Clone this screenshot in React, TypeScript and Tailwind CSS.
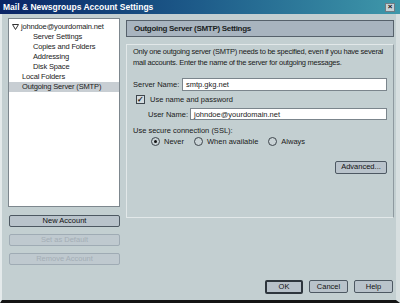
import React from "react";

const font = { fontFamily: '"Liberation Sans", Arial, sans-serif' };

function Btn({
  label,
  disabled,
  primary,
  className = "",
}: {
  label: string;
  disabled?: boolean;
  primary?: boolean;
  className?: string;
}) {
  return (
    <div
      className={`flex items-center justify-center whitespace-nowrap rounded-[2px] text-[7.5px] leading-none ${
        disabled
          ? "border border-[#9fabb4] bg-[#bfc9cf] text-[#a4aeb6]"
          : primary
          ? "border-2 border-[#2e363d] bg-[#b7c1c9] text-[#111]"
          : "border border-[#4d5862] bg-[#b9c3cb] text-[#111]"
      } ${className}`}
    >
      {label}
    </div>
  );
}

function Radio({ checked, label }: { checked?: boolean; label: string }) {
  return (
    <div className="flex items-center gap-[4px] whitespace-nowrap">
      <div className="flex h-[9px] w-[9px] items-center justify-center rounded-full border border-[#3d454c] bg-[#c9d3d6]">
        {checked && <div className="h-[3px] w-[3px] rounded-full bg-[#111]" />}
      </div>
      <span>{label}</span>
    </div>
  );
}

const treeItems = [
  { label: "Server Settings", indent: true },
  { label: "Copies and Folders", indent: true },
  { label: "Addressing", indent: true },
  { label: "Disk Space", indent: true },
  { label: "Local Folders", indent: false },
  { label: "Outgoing Server (SMTP)", indent: false, selected: true },
];

export default function App() {
  return (
    <div
      className="flex h-[303px] w-[400px] flex-col overflow-hidden bg-[#c3cfd1] text-[7.5px] text-[#1a1a1a]"
      style={font}
    >
      {/* title bar */}
      <div className="flex h-[14px] shrink-0 items-center justify-between bg-gradient-to-r from-[#0b2466] via-[#1e5c8a] to-[#3f98aa] pl-[3px] pr-[5px]">
        <span className="text-[8.5px] font-bold text-white">Mail &amp; Newsgroups Account Settings</span>
        <div className="flex h-[9px] w-[10px] items-center justify-center border border-[#6f7c84] bg-[#c7d1d5] text-[8px] font-bold leading-none text-[#111]">
          ×
        </div>
      </div>

      <div className="flex flex-1 border-l-2 border-r-[4px] border-b-[3px] border-l-[#e4eaeb] border-r-[#d7dfe0] border-b-[#141414]">
        <div className="flex flex-1 gap-[6px] pl-[6px] pr-[2px] pt-[4px] pb-[6px]">
          {/* left column */}
          <div className="flex w-[112px] flex-col">
            <div className="h-[189px] border border-[#7d878e] bg-white pt-[3px] text-[7.5px] tracking-[-0.15px]">
              <div className="flex h-[10px] items-center pl-[3px]">
                <svg width="7" height="6" viewBox="0 0 7 6" className="mr-[2px]">
                  <path d="M0.5 0.5 H6.5 L3.5 5.5 Z" fill="none" stroke="#333" strokeWidth="1" />
                </svg>
                <span>johndoe@yourdomain.net</span>
              </div>
              {treeItems.map((it) => (
                <div
                  key={it.label}
                  className={`flex h-[10px] items-center whitespace-nowrap ${it.indent ? "pl-[24px]" : "pl-[13px]"} ${
                    it.selected ? "bg-[#c8ced3]" : ""
                  }`}
                >
                  {it.label}
                </div>
              ))}
            </div>
            <div className="mt-[8px] flex flex-col gap-[7px] pl-[1px]">
              <Btn label="New Account" className="h-[12px]" />
              <Btn label="Set as Default" disabled className="h-[12px]" />
              <Btn label="Remove Account" disabled className="h-[12px]" />
            </div>
          </div>

          {/* right column */}
          <div className="flex flex-1 flex-col">
            <div className="mt-[2px] flex h-[17px] items-center border border-[#56616b] bg-[#a8b4bf] pl-[7px] text-[8px] font-bold tracking-[-0.3px] text-[#1b1f23]">
              Outgoing Server (SMTP) Settings
            </div>

            <div className="mt-[7px] h-[174px] border border-[#e2e8e9] border-r-[#8e999f] pl-[6px] pr-[5px] pt-[2px]">
              <p className="whitespace-nowrap leading-[10.5px] tracking-[-0.25px]">
                Only one outgoing server (SMTP) needs to be specified, even if you have several
                <br />
                mail accounts. Enter the name of the server for outgoing messages.
              </p>

              <div className="mt-[10px] flex items-center pr-[1px]">
                <span className="w-[49px] whitespace-nowrap">Server Name:</span>
                <div className="flex h-[13px] flex-1 items-center border border-[#7b858c] bg-white pl-[3px]">
                  smtp.gkg.net
                </div>
              </div>

              <div className="mt-[3px] flex items-center pl-[3px]">
                <div className="mr-[5px] flex h-[9px] w-[9px] items-center justify-center border border-[#3d454c] bg-[#d4dcdf] text-[8px] font-bold leading-none">
                  ✓
                </div>
                <span>Use name and password</span>
              </div>

              <div className="mt-[3px] flex items-center pl-[15px] pr-[1px]">
                <span className="w-[42px] whitespace-nowrap">User Name:</span>
                <div className="flex h-[12px] flex-1 items-center border border-[#7b858c] bg-white pl-[3px]">
                  johndoe@yourdomain.net
                </div>
              </div>

              <div className="mt-[5px]">Use secure connection (SSL):</div>
              <div className="flex h-[10px] items-center gap-[10px] pl-[18px]">
                <Radio checked label="Never" />
                <Radio label="When available" />
                <Radio label="Always" />
              </div>

              <div className="mt-[14px] flex justify-end pr-[1px]">
                <Btn label="Advanced..." className="h-[13px] w-[52px]" />
              </div>
            </div>

            <div className="mt-auto flex justify-end gap-[6px] pr-[1px]">
              <Btn label="OK" primary className="h-[14px] w-[38px]" />
              <Btn label="Cancel" className="h-[13px] w-[39px]" />
              <Btn label="Help" className="h-[13px] w-[39px]" />
            </div>
          </div>
        </div>
      </div>
    </div>
  );
}
